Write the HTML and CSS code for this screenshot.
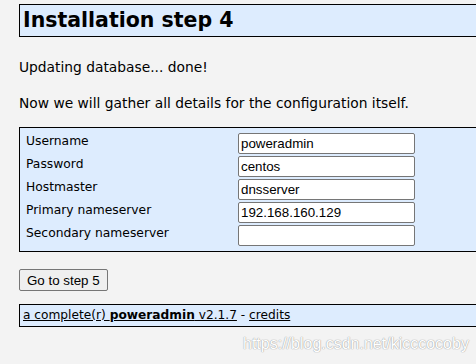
FILE: index.html
```html
<!DOCTYPE html>
<html lang="en">
<head>
    <meta charset="utf-8">
    <title>Poweradmin - Installation step 4</title>
    <link rel="stylesheet" href="styles.css">
</head>
<body>
<div class="page">
    <h1>Installation step 4</h1>

    <div class="intro">
        <p>Updating database... done!</p>
        <p>Now we will gather all details for the configuration itself.</p>
    </div>

    <form method="post" action="#">
        <table class="config">
            <tr>
                <td class="label">Username</td>
                <td><input type="text" class="field" name="pa_db_user" value="poweradmin"></td>
            </tr>
            <tr>
                <td class="label">Password</td>
                <td><input type="text" class="field" name="pa_db_pass" value="centos"></td>
            </tr>
            <tr>
                <td class="label">Hostmaster</td>
                <td><input type="text" class="field" name="dns_hostmaster" value="dnsserver"></td>
            </tr>
            <tr>
                <td class="label">Primary nameserver</td>
                <td><input type="text" class="field" name="dns_ns1" value="192.168.160.129"></td>
            </tr>
            <tr>
                <td class="label">Secondary nameserver</td>
                <td><input type="text" class="field" name="dns_ns2" value=""></td>
            </tr>
        </table>
        <input type="submit" class="button" value="Go to step 5">
    </form>

    <div class="footer">
        <a href="#">a complete(r) <strong>poweradmin</strong> v2.1.7</a> - <a href="#">credits</a>
    </div>
</div>

<div class="watermark">https://blog.csdn.net/kicccocoby</div>
</body>
</html>
```

FILE: styles.css
```css
html {
    overflow: hidden;
}

body {
    font-family: "DejaVu Sans", Verdana, sans-serif;
    font-size: 13.8px;
    color: #000;
    background: #f3f3f3;
    margin: 0;
    padding: 4px 0 0 19px;
}

.page {
    width: 700px;
}

h1 {
    font-size: 20.5px;
    font-weight: bold;
    line-height: 31px;
    margin: 0 0 22px;
    padding: 0 3px;
    background: #ddecfe;
    border: 1px solid #000;
}

.intro {
    margin-bottom: 16px;
}

.intro p {
    margin: 0;
    line-height: 16px;
}

.intro p + p {
    margin-top: 20px;
}

form {
    margin: 0;
}

.config {
    width: 100%;
    border: 1px solid #000;
    border-collapse: separate;
    border-spacing: 0;
    padding: 4px;
    background: #ddecfe;
}

.config td {
    padding: 1px 2px;
    vertical-align: top;
}

.config td.label {
    width: 208px;
    font-size: 12.3px;
    line-height: 16px;
}

.field {
    display: block;
    box-sizing: border-box;
    width: 177px;
    height: 21px;
    margin: 0;
    padding: 1px 2px;
    font-family: "Liberation Sans", Arial, sans-serif;
    font-size: 13.33px;
    color: #000;
    background: #fff;
    border: 1px solid #767676;
    border-radius: 2px;
}

.button {
    display: block;
    box-sizing: border-box;
    height: 22px;
    margin: 17px 0 0;
    padding: 0 7px;
    font-family: "Liberation Sans", Arial, sans-serif;
    font-size: 13.33px;
    color: #000;
    background: #efefef;
    border: 1px solid #767676;
    border-radius: 2px;
}

.footer {
    margin-top: 13px;
    padding: 2px 3px 3px;
    font-size: 12.2px;
    line-height: 16px;
    background: #ddecfe;
    border: 1px solid #000;
}

.footer a {
    color: #000;
}

.watermark {
    position: absolute;
    left: 243px;
    top: 335px;
    font-family: "Liberation Sans", Arial, sans-serif;
    font-size: 16px;
    color: #fff;
    text-shadow: 0 0 1px #999, 0 0 1px #aaa;
}
```
